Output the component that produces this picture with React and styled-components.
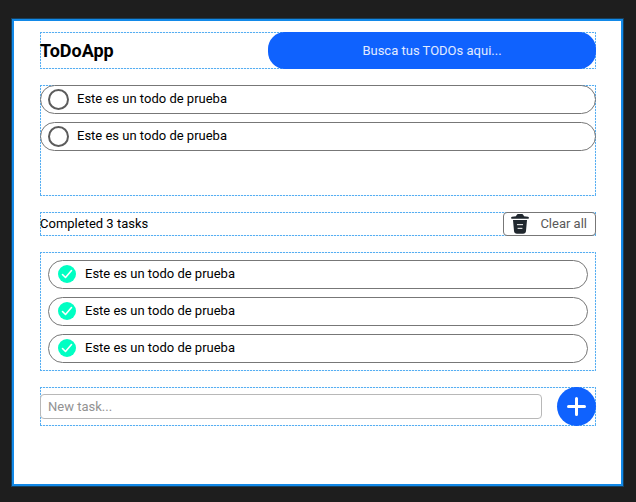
import React, { useState } from "react";
import styled, { createGlobalStyle } from "styled-components";

const GlobalStyle = createGlobalStyle`
  *, *::before, *::after { box-sizing: border-box; }
  body {
    margin: 0;
    background: #1e1e1e;
    color: #000;
    font: 13px/16px Roboto, "Liberation Sans", sans-serif;
  }
  input, button { font: inherit; }
`;

const Page = styled.div`
  display: flex;
  min-height: 100vh;
  padding: 19px 13px 16px 12px;
`;

const Frame = styled.main`
  flex: 1;
  display: flex;
  flex-direction: column;
  gap: 16px;
  padding: 11px 25px 24px 26px;
  background: #fff;
  border: 2px solid #1289e8;
  box-shadow: 0 0 0 1px #16405f;
`;

const dotsAcross = "repeating-linear-gradient(90deg, #56aef2 0 2px, #e4f3fe 2px 3px)";
const dotsDown = "repeating-linear-gradient(180deg, #56aef2 0 2px, #e4f3fe 2px 3px)";

const Section = styled.section`
  background:
    ${dotsAcross} top / 100% 1px no-repeat,
    ${dotsAcross} bottom / 100% 1px no-repeat,
    ${dotsDown} left / 1px 100% no-repeat,
    ${dotsDown} right / 1px 100% no-repeat;
`;

const Header = styled(Section).attrs({ as: "header" })`
  display: flex;
  align-items: center;
  justify-content: space-between;
`;

const Title = styled.h1`
  margin: 0;
  font-size: 18px;
  line-height: 20px;
  font-weight: 700;
`;

const Search = styled.input`
  width: 59%;
  height: 37px;
  padding: 0 16px;
  border: 0;
  border-radius: 17px;
  background: #0f62fe;
  color: #fff;
  text-align: center;
  &::placeholder { color: #e2ebff; opacity: 1; }
`;

const TaskPanel = styled(Section)`
  min-height: ${(p) => (p.$inset ? "0" : "111px")};
  padding: ${(p) => (p.$inset ? "8px" : "0")};
`;

const TaskList = styled.ul`
  display: flex;
  flex-direction: column;
  gap: 8px;
  margin: 0;
  padding: 0;
  list-style: none;
`;

const TaskRow = styled.label`
  display: flex;
  align-items: center;
  gap: 8px;
  height: 29px;
  padding: 0 7px 1px;
  border: 1px solid #777;
  border-radius: 15px;
`;

const CheckCell = styled.span`
  display: grid;
  place-items: center;
  width: 21px;
  height: 21px;
  & > * { grid-area: 1 / 1; }
`;

const Check = styled.input.attrs({ type: "checkbox" })`
  appearance: none;
  width: 21px;
  height: 21px;
  margin: 0;
  border: 2px solid #5c5c5c;
  border-radius: 50%;
  &:checked {
    width: 18px;
    height: 18px;
    border: 0;
    background: #00ffc3;
  }
`;

const Tick = styled.svg`
  width: 18px;
  height: 18px;
  pointer-events: none;
`;

const SummaryBar = styled(Section)`
  display: flex;
  align-items: center;
  justify-content: space-between;
`;

const Summary = styled.p`
  margin: 0;
  padding-bottom: 1px;
`;

const ClearButton = styled.button`
  display: flex;
  align-items: center;
  gap: 11px;
  height: 24px;
  padding: 0 8px 0 7px;
  border: 1px solid #777;
  border-radius: 4px;
  background: #fff;
  color: #595959;
`;

const NewTaskForm = styled(Section).attrs({ as: "form" })`
  display: flex;
  align-items: center;
  gap: 15px;
`;

const NewTaskInput = styled.input`
  flex: 1;
  min-width: 0;
  height: 25px;
  padding: 0 7px 1px;
  border: 1px solid #b8b8b8;
  border-radius: 4px;
  background: #fff;
  color: #000;
  &::placeholder { color: #929292; opacity: 1; }
`;

const AddButton = styled.button`
  display: grid;
  place-items: center;
  width: 39px;
  height: 39px;
  padding: 0;
  border: 0;
  border-radius: 50%;
  background: #0f62fe;
`;

function TrashIcon() {
  return (
    <svg width="18" height="20" viewBox="0 0 54 60" aria-hidden="true">
      <path
        fill="#20272e"
        d="M20 0H34Q38 2 39 7L51 8Q54 9 54 12Q54 14 51 14H3Q0 14 0 12Q0 9 3 8L15 7Q16 2 20 0Z"
      />
      <path fill="#20272e" d="M6 18H48L45 51Q44 59 36 59H18Q10 59 9 51Z" />
      <path stroke="#fff" strokeWidth="3" strokeLinecap="round" d="M19 32H35M21 43H33" />
    </svg>
  );
}

function Task({ text, initialDone }) {
  const [done, setDone] = useState(initialDone);
  return (
    <li>
      <TaskRow>
        <CheckCell>
          <Check checked={done} onChange={(e) => setDone(e.target.checked)} />
          {done && (
            <Tick viewBox="0 0 18 18" aria-hidden="true">
              <path
                d="M4.5 9.5L7.5 12.5L13.5 5.5"
                fill="none"
                stroke="#fff"
                strokeWidth="1.6"
                strokeLinecap="round"
                strokeLinejoin="round"
              />
            </Tick>
          )}
        </CheckCell>
        {text}
      </TaskRow>
    </li>
  );
}

const pending = ["Este es un todo de prueba", "Este es un todo de prueba"];
const completed = [
  "Este es un todo de prueba",
  "Este es un todo de prueba",
  "Este es un todo de prueba",
];

export default function App() {
  return (
    <>
      <GlobalStyle />
      <Page>
        <Frame>
          <Header>
            <Title>ToDoApp</Title>
            <Search type="text" aria-label="Busca tus TODOs" placeholder="Busca tus TODOs aqui..." />
          </Header>
          <TaskPanel>
            <TaskList>
              {pending.map((text, i) => (
                <Task key={i} text={text} initialDone={false} />
              ))}
            </TaskList>
          </TaskPanel>
          <SummaryBar>
            <Summary>Completed {completed.length} tasks</Summary>
            <ClearButton type="button">
              <TrashIcon />
              Clear all
            </ClearButton>
          </SummaryBar>
          <TaskPanel $inset>
            <TaskList>
              {completed.map((text, i) => (
                <Task key={i} text={text} initialDone />
              ))}
            </TaskList>
          </TaskPanel>
          <NewTaskForm onSubmit={(e) => e.preventDefault()}>
            <NewTaskInput type="text" aria-label="New task" placeholder="New task..." />
            <AddButton type="submit" aria-label="Add task">
              <svg width="21" height="21" viewBox="0 0 21 21" aria-hidden="true">
                <path d="M10.5 2.5V18.5M2.5 10.5H18.5" stroke="#fff" strokeWidth="3" strokeLinecap="round" />
              </svg>
            </AddButton>
          </NewTaskForm>
        </Frame>
      </Page>
    </>
  );
}
